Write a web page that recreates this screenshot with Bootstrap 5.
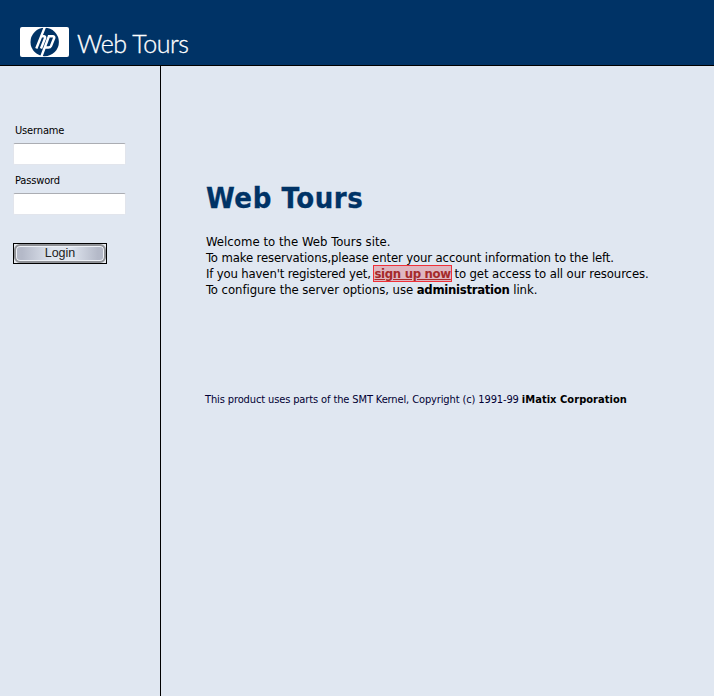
<!DOCTYPE html>
<html lang="en">
<head>
<meta charset="utf-8">
<meta name="viewport" content="width=device-width, initial-scale=1">
<title>Web Tours</title>
<link href="https://cdn.jsdelivr.net/npm/bootstrap@5.3.0/dist/css/bootstrap.min.css" rel="stylesheet">
<style>
body{background:#e0e7f1;color:#000;font:13px/16px "DejaVu Sans Condensed","DejaVu Sans",sans-serif;font-stretch:condensed}
.site-header{height:66px;background:#036;border-bottom:1px solid #000;padding:27px 0 0 20px}
.brand-name{font:300 25px/30px Lato,sans-serif;color:#fff;margin:1px 0 0 8px;white-space:nowrap;letter-spacing:-.45px;-webkit-text-stroke:.3px #fff}
.login-pane{width:161px;border-right:1px solid #000;padding:58px 0 0 13px}
.login-pane label{font-size:11px;line-height:14px;margin:0 0 5px 2px;letter-spacing:-.15px}
.login-pane .form-control{width:113px;height:22px;min-height:0;padding:2px 4px;font-size:12px;border:1px solid #e2e5ec;border-top-color:#abadb3;border-radius:2px;background:#fff;margin-bottom:9px}
.login-btn{width:94px;height:21px;margin-top:28px;padding:0;border:1px solid #000;background:#e8ebf0}
.login-face{width:92px;height:19px;border:2px solid #8e9095;border-radius:6px;box-shadow:inset 0 0 0 1px #eef1f6;background:linear-gradient(90deg,#b4b9c8 7%,#dfe5ef 42%,#dfe5ef 62%,#b4b9c8 93%);font:12.5px/15px "Liberation Sans",sans-serif;color:#222}
.welcome-pane{padding:114px 0 0 45px}
.welcome-pane h1{font:bold 29px/36px "DejaVu Sans Condensed","DejaVu Sans",sans-serif;font-stretch:condensed;color:#036;margin:0 0 18px;letter-spacing:.6px;-webkit-text-stroke:.3px #036}
.line{white-space:nowrap}
.l1{letter-spacing:.03px}
.l2{letter-spacing:-.13px}
.l3{letter-spacing:-.16px}
.l3 span{letter-spacing:-.1px}
.l4{letter-spacing:-.06px}
.l4 b{letter-spacing:-.3px}
.signup,.signup:hover{color:#a52a2a;background:#dfb6c0;outline:1px solid #f03038;font-weight:bold;letter-spacing:-.3px}
.legal{font-size:11px;line-height:14px;color:#000033;margin:95px 0 0 -1px;white-space:nowrap;letter-spacing:-.12px}
.legal b{color:#000;letter-spacing:.05px}
</style>
<script src="https://cdn.jsdelivr.net/npm/bootstrap@5.3.0/dist/js/bootstrap.bundle.min.js"></script>
</head>
<body class="d-flex flex-column vh-100 overflow-hidden">
<header class="site-header d-flex align-items-start flex-shrink-0">
<svg width="49" height="30" viewBox="0 0 49 30" role="img" aria-label="hp"><rect width="49" height="30" rx="2" fill="#fff"/><circle cx="24.7" cy="15" r="14.2" fill="#036"/><g fill="none" stroke="#fff" stroke-width="2.4"><path d="M25.3-1 16.3 21.5M20.5 9.3h3.2q2 0 1.3 2L21 21.5"/><path d="M29.2 8.5 20.8 31M28 9.3h4.8q2 0 1.3 2l-3.1 7.7q-.7 1.5-2.6 1.5h-3.7"/></g></svg>
<div class="brand-name">Web Tours</div>
</header>
<div class="d-flex flex-grow-1">
<form class="login-pane flex-shrink-0">
<label class="d-block" for="user">Username</label>
<input class="form-control" id="user" type="text">
<label class="d-block" for="pass">Password</label>
<input class="form-control" id="pass" type="password">
<button class="login-btn d-block" type="button"><span class="login-face d-block">Login</span></button>
</form>
<main class="welcome-pane">
<h1>Web Tours</h1>
<div class="line l1">Welcome to the Web Tours site.</div>
<div class="line l2">To make reservations,please enter your account information to the left.</div>
<div class="line l3">If you haven't registered yet, <a class="signup" href="#">sign up now</a><span> to get access to all our resources.</span></div>
<div class="line l4">To configure the server options, use <b>administration</b> link.</div>
<p class="legal">This product uses parts of the SMT Kernel, Copyright (c) 1991-99 <b>iMatix Corporation</b></p>
</main>
</div>
</body>
</html>
